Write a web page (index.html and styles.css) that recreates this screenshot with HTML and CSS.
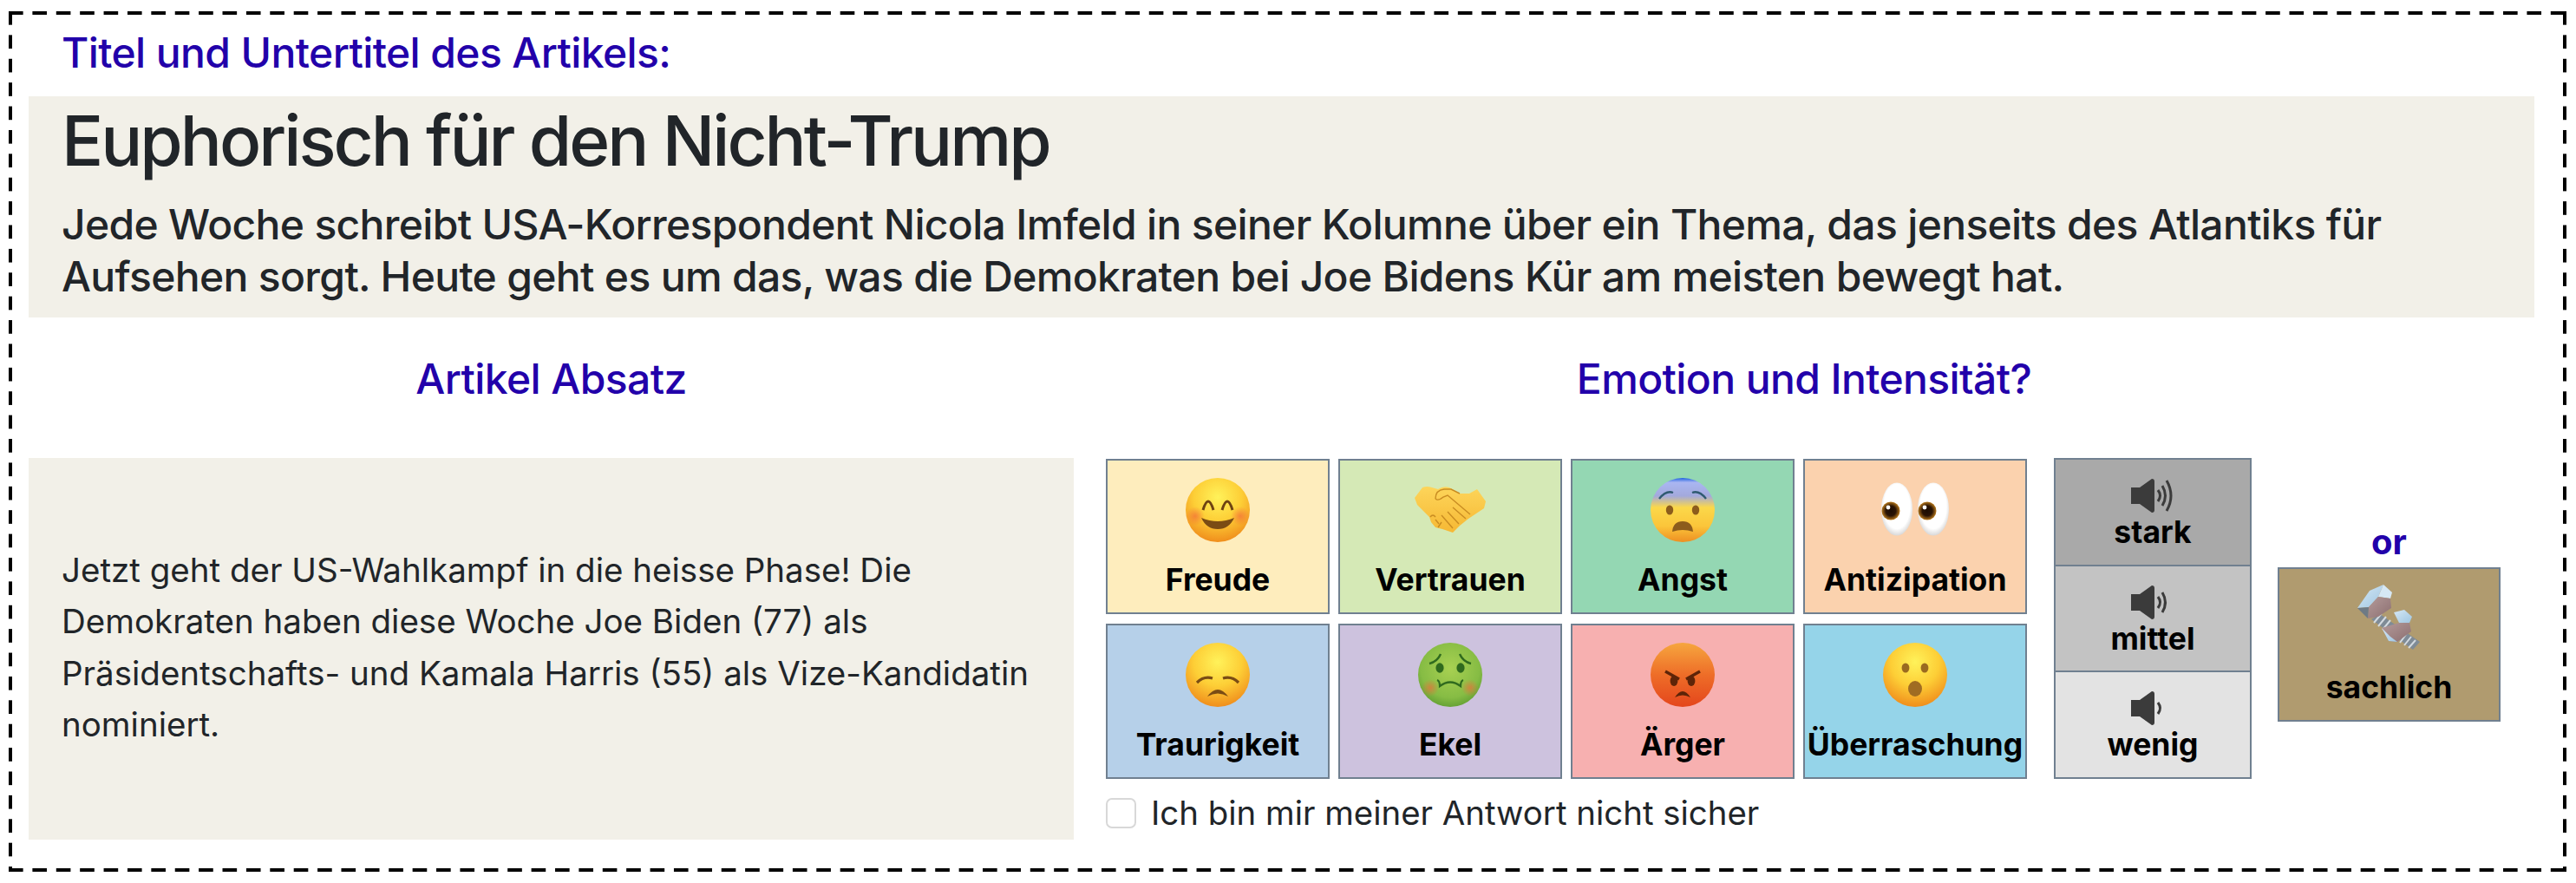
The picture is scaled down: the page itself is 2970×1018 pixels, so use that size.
FILE: index.html
```html
<!DOCTYPE html>
<html lang="de">
<head>
    <meta charset="UTF-8">
    <title>Euphorisch für den Nicht-Trump</title>
    <link rel="stylesheet" href="styles.css">
</head>
<body>
    <!-- shared gradients for the emoji icons -->
    <svg class="svg-defs" aria-hidden="true">
        <defs>
            <radialGradient id="faceYellow" cx="0.5" cy="0.3" r="0.75">
                <stop offset="0" stop-color="#fff25a"/>
                <stop offset="0.5" stop-color="#fdce36"/>
                <stop offset="1" stop-color="#ee8418"/>
            </radialGradient>
            <linearGradient id="faceFear" x1="0" y1="0" x2="0" y2="1">
                <stop offset="0" stop-color="#1f62e0"/>
                <stop offset="0.07" stop-color="#a9b6f2"/>
                <stop offset="0.28" stop-color="#a3a9dc"/>
                <stop offset="0.46" stop-color="#fbd84a"/>
                <stop offset="0.75" stop-color="#fbc53a"/>
                <stop offset="1" stop-color="#ee8f22"/>
            </linearGradient>
            <radialGradient id="faceSick" cx="0.5" cy="0.4" r="0.65">
                <stop offset="0" stop-color="#a8d152"/>
                <stop offset="0.7" stop-color="#86bc44"/>
                <stop offset="1" stop-color="#5b9a30"/>
            </radialGradient>
            <linearGradient id="faceAngry" x1="0" y1="0" x2="0" y2="1">
                <stop offset="0" stop-color="#f6a63e"/>
                <stop offset="0.5" stop-color="#ee6d28"/>
                <stop offset="1" stop-color="#e4461c"/>
            </linearGradient>
            <radialGradient id="cheek">
                <stop offset="0" stop-color="#f2663a" stop-opacity="0.65"/>
                <stop offset="1" stop-color="#f2663a" stop-opacity="0"/>
            </radialGradient>
            <radialGradient id="iris">
                <stop offset="0" stop-color="#1c0d02"/>
                <stop offset="0.55" stop-color="#2a1404"/>
                <stop offset="1" stop-color="#b8791c"/>
            </radialGradient>
            <radialGradient id="eyeWhite" cx="0.5" cy="0.45" r="0.6">
                <stop offset="0.7" stop-color="#ffffff"/>
                <stop offset="1" stop-color="#c9c9c9"/>
            </radialGradient>
            <linearGradient id="hand" x1="0" y1="0" x2="0" y2="1">
                <stop offset="0" stop-color="#fdd55a"/>
                <stop offset="1" stop-color="#f6b834"/>
            </linearGradient>
            <linearGradient id="metalTop" x1="0" y1="0" x2="1" y2="1">
                <stop offset="0" stop-color="#d6e8f4"/>
                <stop offset="1" stop-color="#9fc6e2"/>
            </linearGradient>
            <linearGradient id="metalFace" x1="0" y1="0" x2="1" y2="1">
                <stop offset="0" stop-color="#b49a9a"/>
                <stop offset="1" stop-color="#8c6f70"/>
            </linearGradient>
        </defs>
    </svg>

    <div class="frame">
        <div class="label label-title">Titel und Untertitel des Artikels:</div>

        <div class="article-head">
            <h1>Euphorisch für den Nicht-Trump</h1>
            <p>Jede Woche schreibt USA-Korrespondent Nicola Imfeld in seiner Kolumne über ein Thema, das jenseits des Atlantiks für Aufsehen sorgt. Heute geht es um das, was die Demokraten bei Joe Bidens Kür am meisten bewegt hat.</p>
        </div>

        <div class="columns">
            <div class="col-left">
                <div class="label label-center">Artikel Absatz</div>
                <div class="paragraph">Jetzt geht der US-Wahlkampf in die heisse Phase! Die Demokraten haben diese Woche Joe Biden (77) als Präsidentschafts- und Kamala Harris (55) als Vize-Kandidatin nominiert.</div>
            </div>

            <div class="col-right">
                <div class="label label-center">Emotion und Intensität?</div>
                <div class="answers">
                    <div>
                        <div class="emotions">
                            <div class="tile freude">
                                <svg class="emoji" viewBox="0 0 74 74">
                                    <circle cx="37" cy="37" r="37" fill="url(#faceYellow)"/>
                                    <circle cx="11" cy="44" r="11" fill="url(#cheek)"/>
                                    <circle cx="63" cy="44" r="11" fill="url(#cheek)"/>
                                    <path d="M20 37Q26 17 32 37M42 37Q48 17 54 37" fill="none" stroke="#6e4312" stroke-width="3"/>
                                    <path d="M18 46Q37 54 56 46Q50 59 37 59Q24 59 18 46Z" fill="#7a4c14"/>
                                </svg>
                                <span>Freude</span>
                            </div>
                            <div class="tile vertrauen">
                                <svg class="emoji" viewBox="0 0 82 74">
                                    <g transform="translate(0 9)">
                                        <path d="M0 14L9 2Q14 0 20 2L27 4Q33 0 40 2L52 9H63L72 4L82 18L80 26L62 38L52 46L44 54L38 52L32 50L24 48L19 42L17 36L3 22Z" fill="url(#hand)"/>
                                        <path d="M24 15Q24 5 34 4L42 4L52 9M24 15Q27 18 33 13L38 11L64 33M44 25L59 38M38 30L51 44M24 39L28 44M31 34L44 49M18 36Q21 32 24 36M27 48L31 42" fill="none" stroke="#c98c22" stroke-width="1.4"/>
                                    </g>
                                </svg>
                                <span>Vertrauen</span>
                            </div>
                            <div class="tile angst">
                                <svg class="emoji" viewBox="0 0 74 74">
                                    <circle cx="37" cy="37" r="37" fill="url(#faceFear)"/>
                                    <path d="M10 24Q18 14 26 17M64 24Q56 14 48 17" fill="none" stroke="#2f5a70" stroke-width="2.4"/>
                                    <ellipse cx="22" cy="37" rx="4.2" ry="5.5" fill="#8c5c1c"/>
                                    <ellipse cx="52" cy="37" rx="4.2" ry="5.5" fill="#8c5c1c"/>
                                    <path d="M25 62Q26 50 37 50Q48 50 49 62Q37 58 25 62Z" fill="#8c5c1c"/>
                                </svg>
                                <span>Angst</span>
                            </div>
                            <div class="tile antizipation">
                                <svg class="emoji" viewBox="0 0 78 74">
                                    <ellipse cx="18" cy="36" rx="18" ry="30.5" fill="url(#eyeWhite)"/>
                                    <ellipse cx="60" cy="36" rx="18" ry="30.5" fill="url(#eyeWhite)"/>
                                    <circle cx="11" cy="38" r="10.5" fill="url(#iris)"/>
                                    <circle cx="53" cy="38" r="10.5" fill="url(#iris)"/>
                                    <circle cx="8" cy="34" r="2.4" fill="#fff"/>
                                    <circle cx="50" cy="34" r="2.4" fill="#fff"/>
                                </svg>
                                <span>Antizipation</span>
                            </div>
                            <div class="tile traurigkeit">
                                <svg class="emoji" viewBox="0 0 74 74">
                                    <circle cx="37" cy="37" r="37" fill="url(#faceYellow)"/>
                                    <path d="M13 46Q21 38 31 41M61 46Q53 38 43 41" fill="none" stroke="#7a4c14" stroke-width="3.2"/>
                                    <path d="M25 62Q37 46 49 62Q37 55 25 62Z" fill="#7a4c14"/>
                                </svg>
                                <span>Traurigkeit</span>
                            </div>
                            <div class="tile ekel">
                                <svg class="emoji" viewBox="0 0 74 74">
                                    <circle cx="37" cy="37" r="37" fill="url(#faceSick)"/>
                                    <circle cx="14" cy="52" r="10" fill="url(#cheek)"/>
                                    <circle cx="60" cy="52" r="10" fill="url(#cheek)"/>
                                    <path d="M13 24Q22 22 26 13M61 24Q52 22 48 13" fill="none" stroke="#2f6a1e" stroke-width="2.4"/>
                                    <ellipse cx="25" cy="29" rx="4.6" ry="5.8" fill="#2f6a1e"/>
                                    <ellipse cx="49" cy="29" rx="4.6" ry="5.8" fill="#2f6a1e"/>
                                    <path d="M22 43Q25 44 25 50Q37 41 49 50Q49 44 52 43" fill="none" stroke="#2f6a1e" stroke-width="2.2"/>
                                </svg>
                                <span>Ekel</span>
                            </div>
                            <div class="tile aerger">
                                <svg class="emoji" viewBox="0 0 74 74">
                                    <circle cx="37" cy="37" r="37" fill="url(#faceAngry)"/>
                                    <path d="M17 33L33 42M57 33L41 42" fill="none" stroke="#5e2408" stroke-width="3.4"/>
                                    <ellipse cx="27" cy="44" rx="4.4" ry="6" fill="#5e2408"/>
                                    <ellipse cx="47" cy="44" rx="4.4" ry="6" fill="#5e2408"/>
                                    <path d="M28 63Q37 49 46 63Q37 58 28 63Z" fill="#5e2408"/>
                                </svg>
                                <span>Ärger</span>
                            </div>
                            <div class="tile ueberraschung">
                                <svg class="emoji" viewBox="0 0 74 74">
                                    <circle cx="37" cy="37" r="37" fill="url(#faceYellow)"/>
                                    <ellipse cx="26" cy="29" rx="4.4" ry="5.6" fill="#9a6a20"/>
                                    <ellipse cx="48" cy="29" rx="4.4" ry="5.6" fill="#9a6a20"/>
                                    <ellipse cx="37" cy="53" rx="8" ry="9" fill="#a06c22"/>
                                </svg>
                                <span>Überraschung</span>
                            </div>
                        </div>
                        <label class="unsure">
                            <span class="checkbox"></span>
                            Ich bin mir meiner Antwort nicht sicher
                        </label>
                    </div>

                    <div class="volume">
                        <div class="level stark">
                            <svg class="speaker" viewBox="0 0 50 39">
                                <path d="M0 10H10L24 0Q27 0 27 3V36Q27 39 24 39L10 29H0Z" fill="#3b3b3b"/>
                                <path d="M31 13Q36 19.5 31 26M36 8Q43 19.5 36 31M41 2Q51 19.5 41 37" fill="none" stroke="#3b3b3b" stroke-width="3"/>
                            </svg>
                            <span>stark</span>
                        </div>
                        <div class="level mittel">
                            <svg class="speaker" viewBox="0 0 50 39">
                                <path d="M0 10H10L24 0Q27 0 27 3V36Q27 39 24 39L10 29H0Z" fill="#3b3b3b"/>
                                <path d="M31 13Q36 19.5 31 26M36 8Q43 19.5 36 31" fill="none" stroke="#3b3b3b" stroke-width="3"/>
                            </svg>
                            <span>mittel</span>
                        </div>
                        <div class="level wenig">
                            <svg class="speaker" viewBox="0 0 50 39">
                                <path d="M0 10H10L24 0Q27 0 27 3V36Q27 39 24 39L10 29H0Z" fill="#3b3b3b"/>
                                <path d="M31 13Q36 19.5 31 26" fill="none" stroke="#3b3b3b" stroke-width="3"/>
                            </svg>
                            <span>wenig</span>
                        </div>
                    </div>

                    <div class="neutral">
                        <div class="or">or</div>
                        <div class="tile sachlich">
                            <svg class="emoji bolt" viewBox="0 0 74 77">
                                <path d="M26 34L72 66L64 75L16 40Z" fill="#7f8b96"/>
                                <path d="M28 33L19 44M33 37L24 48M38 41L29 52M52 52L44 63M57 56L49 67M62 60L54 70M67 64L59 73" fill="none" stroke="#d3dae0" stroke-width="2"/>
                                <path d="M0 27L14 7L30 0L24 14L13 26Z" fill="url(#metalTop)"/>
                                <path d="M30 0L40 9L38 16L24 14Z" fill="#d6e8f4"/>
                                <path d="M24 14L38 16L39 27L24 37L12 39L13 26Z" fill="url(#metalFace)"/>
                                <path d="M0 27L13 26L12 39Z" fill="#6e7a85"/>
                                <path d="M42 32L54 29L63 37L60 44L48 44Z" fill="url(#metalTop)"/>
                                <path d="M28 50L48 44L60 44L62 54L46 66L36 65Z" fill="url(#metalFace)"/>
                                <path d="M28 50L36 65L46 66L38 60Z" fill="url(#metalTop)"/>
                            </svg>
                            <span>sachlich</span>
                        </div>
                    </div>
                </div>
            </div>
        </div>
    </div>
</body>
</html>
```

FILE: styles.css
```css
body {
    margin: 0;
    font-family: 'Inter', sans-serif;
    color: #212529;
    background: #fff;
}

.svg-defs {
    position: absolute;
    width: 0;
    height: 0;
}

/* the dashes are longer than a css dashed border gives */
.frame {
    box-sizing: border-box;
    width: 2949px;
    height: 992px;
    margin: 13px 0 0 10px;
    padding: 25px 37px 0 23px;
    background-image:
        linear-gradient(90deg, #000 17px, transparent 17px),
        linear-gradient(90deg, #000 17px, transparent 17px),
        linear-gradient(#000 16px, transparent 16px),
        linear-gradient(#000 16px, transparent 16px);
    background-position: 0 0, 0 100%, 0 0, 100% 0;
    background-size: 27.4px 4px, 27.4px 4px, 4px 27.4px, 4px 27.4px;
    background-repeat: repeat-x, repeat-x, repeat-y, repeat-y;
}

.label {
    font-size: 48px;
    line-height: 46px;
    letter-spacing: -0.6px;
    font-weight: 500;
    color: #2200aa;
}

.label-title {
    padding-left: 38px;
}

.label-center {
    text-align: center;
}

.article-head {
    margin-top: 27px;
    height: 255px;
    padding: 6px 38px 0;
    background: #f2f0e8;
    box-sizing: border-box;
}

.article-head h1 {
    margin: 0;
    font-size: 80px;
    line-height: 90px;
    letter-spacing: -3px;
    font-weight: 500;
}

.article-head p {
    margin: 22px 0 0;
    font-size: 48px;
    line-height: 60px;
    letter-spacing: -0.67px;
    font-weight: 500;
}

.columns {
    display: flex;
    margin-top: 48px;
}

.col-left {
    width: 1205px;
}

.paragraph {
    display: flex;
    align-items: center;
    box-sizing: border-box;
    height: 440px;
    margin-top: 68px;
    padding: 0 38px 3px;
    font-size: 38.5px;
    line-height: 59.5px;
    background: #f2f0e8;
}

.col-right {
    width: 1684px;
}

.answers {
    display: flex;
    margin-top: 68px;
    padding-left: 37px;
}

.emotions {
    display: grid;
    grid-template-columns: repeat(4, 258px);
    grid-auto-rows: 179px;
    column-gap: 10px;
    row-gap: 11px;
    margin-top: 1px;
}

.tile {
    box-sizing: border-box;
    display: flex;
    flex-direction: column;
    align-items: center;
    padding-top: 20px;
    border: 2px solid #708090;
    font-size: 35.5px;
    line-height: 41px;
    font-weight: 700;
    color: #000;
}

.emoji {
    height: 74px;
    margin-bottom: 23px;
}

.freude { background: #feedbd; }
.vertrauen { background: #d5e9b6; }
.angst { background: #94d7b3; }
.antizipation { background: #fbd2ae; }
.traurigkeit { background: #b6d0e9; }
.ekel { background: #cdc2de; }
.aerger { background: #f7b0b0; }
.ueberraschung { background: #95d4e9; }
.sachlich { background: #b09b6f; }

.unsure {
    display: flex;
    align-items: center;
    gap: 17px;
    margin-top: 22px;
    font-size: 38.4px;
    line-height: 35px;
}

.checkbox {
    box-sizing: border-box;
    width: 35px;
    height: 35px;
    border: 2px solid #d8d8d8;
    border-radius: 7px;
    background: #fff;
}

.volume {
    display: flex;
    flex-direction: column;
    box-sizing: border-box;
    width: 228px;
    height: 370px;
    margin-left: 31px;
    border: 2px solid #708090;
}

.level {
    flex: 1;
    display: flex;
    flex-direction: column;
    align-items: center;
    padding-top: 22px;
    font-size: 35.5px;
    line-height: 41px;
    font-weight: 700;
    color: #000;
}

.level + .level {
    border-top: 2px solid #708090;
}

.speaker {
    width: 50px;
    height: 39px;
    margin-bottom: 2px;
}

.stark { background: #a9a9a9; }
.mittel { background: #c3c3c3; }
.wenig { background: #e3e3e3; }

.neutral {
    width: 257px;
    margin-left: 30px;
    padding-top: 75px;
}

.or {
    height: 51px;
    text-align: center;
    font-size: 40px;
    line-height: 44px;
    font-weight: 700;
    color: #2200aa;
}

.sachlich {
    height: 178px;
    padding-top: 18px;
}

.bolt {
    height: 77px;
    margin-bottom: 21px;
}
```
